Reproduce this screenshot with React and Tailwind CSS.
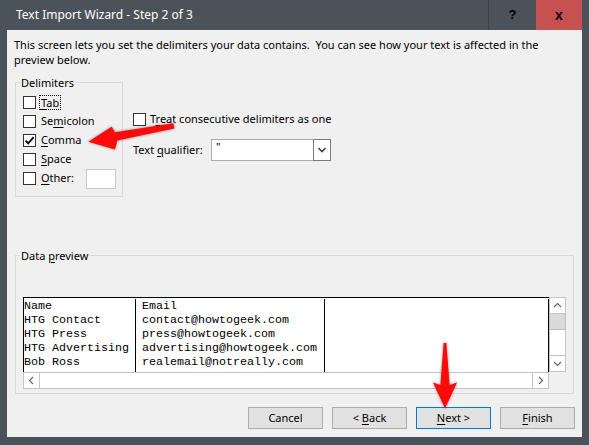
import React from "react";

const ui = "font-['Noto_Sans',sans-serif] text-[11px] text-black";

function Check({ checked }) {
  return (
    <span className="w-[13px] h-[13px] bg-white border border-[#333333] flex items-center justify-center shrink-0">
      {checked && (
        <svg width="11" height="11" viewBox="0 0 11 11">
          <path d="M1.6 5.6 L4.2 8.3 L9.6 2.2" stroke="#000" strokeWidth="1.8" fill="none" />
        </svg>
      )}
    </span>
  );
}

function U({ children }) {
  return <span className="underline underline-offset-2">{children}</span>;
}

function Chevron({ dir, className = "" }) {
  const d = {
    up: "M1 6 L4.5 2.5 L8 6",
    down: "M1 3 L4.5 6.5 L8 3",
    left: "M6 1 L2.5 4.5 L6 8",
    right: "M3 1 L6.5 4.5 L3 8",
  }[dir];
  return (
    <svg width="9" height="9" viewBox="0 0 9 9" className={className}>
      <path d={d} stroke="#606060" strokeWidth="1.1" fill="none" />
    </svg>
  );
}

const rows = [
  ["Name", "Email"],
  ["HTG Contact", "contact@howtogeek.com"],
  ["HTG Press", "press@howtogeek.com"],
  ["HTG Advertising", "advertising@howtogeek.com"],
  ["Bob Ross", "realemail@notreally.com"],
];

function Btn({ children, focused }) {
  return (
    <div
      className={
        "w-[75px] h-[22px] flex items-center justify-center bg-[#e1e1e1] border " +
        (focused ? "border-[#0078d7]" : "border-[#adadad]")
      }
    >
      <span className="whitespace-pre">{children}</span>
    </div>
  );
}

export default function App() {
  return (
    <div className={"relative w-[589px] h-[445px] bg-[#4a5359] overflow-hidden " + ui}>
      {/* title bar */}
      <div className="h-[30px] flex items-stretch">
        <div className="flex-1 pl-[16px] flex items-center text-white text-[12px] leading-none">
          Text Import Wizard - Step 2 of 3
        </div>
        <div className="w-[48px] border-l border-[#3a4247] flex items-center justify-center font-['Liberation_Sans',sans-serif] font-bold text-[13px] text-black">
          ?
        </div>
        <div className="w-[46px] bg-[#c75050] flex items-center justify-center font-['Liberation_Sans',sans-serif] font-bold text-[14px] text-black">
          x
        </div>
        <div className="w-[7px]" />
      </div>

      {/* dialog body */}
      <div className="mx-[7px] h-[407px] bg-[#f0f0f0] flex flex-col">
        <div className="pt-[7px] pl-[7px] leading-[15px] whitespace-nowrap">
          <div>This screen lets you set the delimiters your data contains.&nbsp; You can see how your text is affected in the</div>
          <div>preview below.</div>
        </div>

        <div className="mt-[15px] ml-[8px] flex items-start">
          {/* Delimiters group */}
          <div className="w-[108px] border border-[#d9d9d9] pb-[8px] flex flex-col">
            <div className="-mt-[8px] ml-[4px] px-[1px] bg-[#f0f0f0] w-fit leading-[15px]">Delimiters</div>
            <div className="mt-[3px] pl-[7px] flex flex-col">
              <div className="h-[19px] flex items-center">
                <Check />
                <span className="ml-[3px] px-[1px] border border-dotted border-black leading-[13px]">
                  <U>T</U>ab
                </span>
              </div>
              <div className="h-[19px] flex items-center">
                <Check />
                <span className="ml-[5px]">
                  Se<U>m</U>icolon
                </span>
              </div>
              <div className="h-[19px] flex items-center">
                <Check checked />
                <span className="ml-[5px]">
                  <U>C</U>omma
                </span>
              </div>
              <div className="h-[19px] flex items-center">
                <Check />
                <span className="ml-[5px]">
                  <U>S</U>pace
                </span>
              </div>
              <div className="h-[19px] flex items-center">
                <Check />
                <span className="ml-[5px] w-[45px]">
                  <U>O</U>ther:
                </span>
                <span className="w-[30px] h-[20px] bg-white border border-[#c8c8c8]" />
              </div>
            </div>
          </div>

          {/* options column */}
          <div className="ml-[10px] pt-[28px] flex flex-col">
            <div className="h-[19px] flex items-center">
              <Check />
              <span className="ml-[4px]">
                T<U>r</U>eat consecutive delimiters as one
              </span>
            </div>
            <div className="mt-[10px] h-[22px] flex items-center">
              <span className="w-[78px]">
                Text <U>q</U>ualifier:
              </span>
              <div className="w-[120px] h-[22px] flex bg-white border-y border-l border-[#adadad]">
                <span className="flex-1 pl-[4px] leading-[14px]">"</span>
                <span className="w-[18px] -my-[1px] border border-[#7a7a7a] bg-white flex items-center justify-center">
                  <svg width="10" height="8" viewBox="0 0 10 8">
                    <path d="M1.5 2 L5 5.5 L8.5 2" stroke="#404040" strokeWidth="1.6" fill="none" />
                  </svg>
                </span>
              </div>
            </div>
          </div>
        </div>

        {/* Data preview group */}
        <div className="mt-[58px] ml-[8px] w-[559px] border border-[#d9d9d9] pb-[4px] flex flex-col">
          <div className="-mt-[8px] ml-[4px] px-[1px] bg-[#f0f0f0] w-fit leading-[15px]">
            Data <U>p</U>review
          </div>
          <div className="mt-[34px] ml-[7px] w-[543px] flex flex-col">
            <div className="flex h-[75px]">
              <div className="flex-1 bg-white border-t border-l border-black flex font-['Liberation_Mono',monospace] text-[11.67px] leading-[14px] pt-[1px] overflow-hidden">
                <div className="w-[112px] border-r border-black">
                  {rows.map((r) => (
                    <div key={r[0]} className="whitespace-pre">{r[0]}</div>
                  ))}
                </div>
                <div className="w-[189px] border-r border-black pl-[6px]">
                  {rows.map((r) => (
                    <div key={r[1]} className="whitespace-pre">{r[1]}</div>
                  ))}
                </div>
                <div className="flex-1 border-r border-black" />
              </div>
              {/* vertical scrollbar */}
              <div className="w-[17px] flex flex-col bg-white">
                <div className="h-[17px] border border-[#c4c4c4] flex items-center justify-center">
                  <Chevron dir="up" />
                </div>
                <div className="h-[16px] bg-[#dadada] border-x border-b border-[#bdbdbd]" />
                <div className="flex-1 border-x border-[#c4c4c4]" />
                <div className="h-[17px] border border-[#c4c4c4] flex items-center justify-center">
                  <Chevron dir="down" />
                </div>
              </div>
            </div>
            {/* horizontal scrollbar */}
            <div className="flex h-[17px]">
              <div className="flex-1 flex bg-white border border-[#c4c4c4]">
                <div className="w-[16px] border-r border-[#c4c4c4] flex items-center justify-center">
                  <Chevron dir="left" />
                </div>
                <div className="flex-1" />
                <div className="w-[16px] border-l border-[#c4c4c4] flex items-center justify-center">
                  <Chevron dir="right" />
                </div>
              </div>
              <div className="w-[17px]" />
            </div>
          </div>
        </div>

        {/* buttons */}
        <div className="mt-[13px] pr-[7px] flex justify-end gap-[9px]">
          <Btn>Cancel</Btn>
          <Btn>
            {"< "}
            <U>B</U>ack
          </Btn>
          <Btn focused>
            <U>N</U>
            {"ext >"}
          </Btn>
          <Btn>
            <U>F</U>inish
          </Btn>
        </div>
      </div>

      {/* red annotation arrows */}
      <svg
        className="absolute inset-0 pointer-events-none"
        width="589"
        height="445"
        viewBox="0 0 589 445"
        style={{ filter: "drop-shadow(0 0 1.5px rgba(0,0,0,0.45))" }}
      >
        <polygon
          points="88.3,141.7 111.7,126.7 115,132.3 173.3,123.3 174.3,128.5 117.3,140.5 115,149.5"
          fill="#ff0a0a"
        />
        <polygon
          points="443.6,343 446.4,343 449.6,385 457,382.5 445,408.5 433,382.5 440.4,385"
          fill="#ff0a0a"
        />
      </svg>
    </div>
  );
}
